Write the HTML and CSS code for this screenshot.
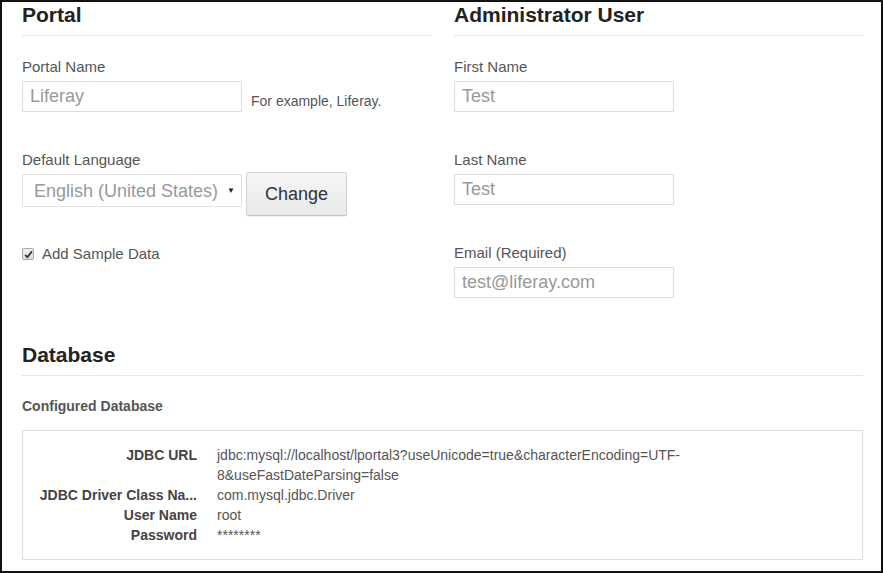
FILE: index.html
```html
<!DOCTYPE html>
<html lang="en">
<head>
<meta charset="utf-8">
<title>Basic Configuration</title>
<link rel="stylesheet" href="styles.css">
</head>
<body>
<div class="frame">
  <div class="columns">
    <section class="col">
      <h2 class="section-title">Portal</h2>
      <div class="section-body">
        <div class="group">
          <label class="label" for="portal-name">Portal Name</label>
          <div class="row">
            <input class="field" id="portal-name" type="text" placeholder="Liferay">
            <span class="help">For example, Liferay.</span>
          </div>
        </div>
        <div class="group group-lang">
          <label class="label" for="lang">Default Language</label>
          <div class="row row-lang">
            <div class="select-wrap">
              <select class="select" id="lang">
                <option>English (United States)</option>
              </select>
              <span class="caret">&#9660;</span>
            </div>
            <button class="btn" type="button">Change</button>
          </div>
        </div>
        <div class="check-row">
          <span class="checkbox">
            <svg width="9" height="9" viewBox="0 0 9 9"><path d="M1.2 4.8 L3.5 7.2 L7.9 1.4" fill="none" stroke="#333" stroke-width="1.8"/></svg>
          </span>
          <span class="check-label">Add Sample Data</span>
        </div>
      </div>
    </section>
    <section class="col">
      <h2 class="section-title">Administrator User</h2>
      <div class="section-body">
        <div class="group">
          <label class="label" for="first">First Name</label>
          <input class="field" id="first" type="text" placeholder="Test">
        </div>
        <div class="group">
          <label class="label" for="last">Last Name</label>
          <input class="field" id="last" type="text" placeholder="Test">
        </div>
        <div class="group group-last">
          <label class="label" for="email">Email (Required)</label>
          <input class="field" id="email" type="text" placeholder="test@liferay.com">
        </div>
      </div>
    </section>
  </div>

  <section class="db">
    <h2 class="section-title">Database</h2>
    <h4 class="sub-title">Configured Database</h4>
    <div class="db-box">
      <dl class="db-list">
        <dt>JDBC URL</dt>
        <dd>jdbc:mysql://localhost/lportal3?useUnicode=true&amp;characterEncoding=UTF-8&amp;useFastDateParsing=false</dd>
        <dt title="JDBC Driver Class Name">JDBC Driver Class Na...</dt>
        <dd>com.mysql.jdbc.Driver</dd>
        <dt>User Name</dt>
        <dd>root</dd>
        <dt>Password</dt>
        <dd>********</dd>
      </dl>
    </div>
  </section>
</div>
</body>
</html>
```

FILE: styles.css
```css
* { box-sizing: border-box; }

html, body {
  margin: 0;
  padding: 0;
  background: #fff;
}

body {
  font-family: "Liberation Sans", Arial, sans-serif;
  color: #555;
}

.frame {
  width: 883px;
  height: 573px;
  border: 2px solid #111;
  padding: 1px 18px 0 20px;
  overflow: hidden;
}

.columns {
  display: grid;
  grid-template-columns: 1fr 1fr;
  column-gap: 23px;
}

.section-title {
  margin: 0;
  font-size: 21px;
  line-height: 24px;
  font-weight: bold;
  color: #222;
  padding-bottom: 8px;
  border-bottom: 1px solid #e5e5e5;
}

.section-body {
  margin-top: 21px;
}

.group {
  margin-bottom: 38px;
}

.group-lang {
  margin-bottom: 28px;
}

.group-last {
  margin-bottom: 0;
}

.label {
  display: block;
  font-size: 15px;
  line-height: 20px;
  color: #555;
  margin-bottom: 4px;
}

.row {
  display: flex;
  align-items: flex-start;
}

.field {
  display: block;
  width: 220px;
  height: 31px;
  margin: 0;
  padding: 0 7px;
  border: 1px solid #ddd;
  border-radius: 0;
  font-family: inherit;
  font-size: 18px;
  color: #999;
  background: #fff;
  outline: none;
}

.field::placeholder {
  color: #999;
  opacity: 1;
}

.help {
  margin-left: 9px;
  margin-top: 10px;
  font-size: 14px;
  line-height: 20px;
  color: #555;
}

.select-wrap {
  position: relative;
  width: 220px;
  height: 33px;
}

.select {
  appearance: none;
  -webkit-appearance: none;
  width: 100%;
  height: 100%;
  margin: 0;
  padding: 0 0 0 11px;
  border: 1px solid #e3e3e3;
  border-radius: 2px;
  background: #fff;
  font-family: inherit;
  font-size: 18px;
  color: #999;
  outline: none;
}

.caret {
  position: absolute;
  right: 7px;
  top: 12px;
  font-size: 8px;
  line-height: 9px;
  color: #222;
  pointer-events: none;
}

.btn {
  margin: -2px 0 0 4px;
  width: 101px;
  height: 44px;
  padding: 0;
  border: 1px solid #d4d4d4;
  border-bottom-color: #c2c2c2;
  border-radius: 2px;
  background: linear-gradient(#f6f6f6, #e9e9e9);
  box-shadow: 0 1px 1px rgba(0, 0, 0, 0.06);
  font-family: inherit;
  font-size: 18px;
  color: #333;
}

.check-row {
  display: flex;
  align-items: center;
  height: 20px;
}

.checkbox {
  width: 12px;
  height: 12px;
  border: 1px solid #aaa;
  border-radius: 2px;
  background: linear-gradient(#f2f2f2, #dcdcdc);
  display: flex;
  align-items: center;
  justify-content: center;
  margin-right: 8px;
}

.check-label {
  font-size: 15px;
  line-height: 20px;
  color: #555;
}

.db {
  margin-top: 45px;
}

.sub-title {
  margin: 20px 0 0;
  font-size: 14px;
  line-height: 20px;
  font-weight: bold;
  color: #555;
}

.db-box {
  margin-top: 14px;
  border: 1px solid #ddd;
  padding: 14px 14px;
}

.db-list {
  margin: 0;
  display: grid;
  grid-template-columns: 160px 480px;
  column-gap: 20px;
  font-size: 14px;
  line-height: 20px;
}

.db-list dt {
  margin: 0;
  font-weight: bold;
  color: #444;
  text-align: right;
  white-space: nowrap;
}

.db-list dd {
  margin: 0;
  color: #555;
}
```
